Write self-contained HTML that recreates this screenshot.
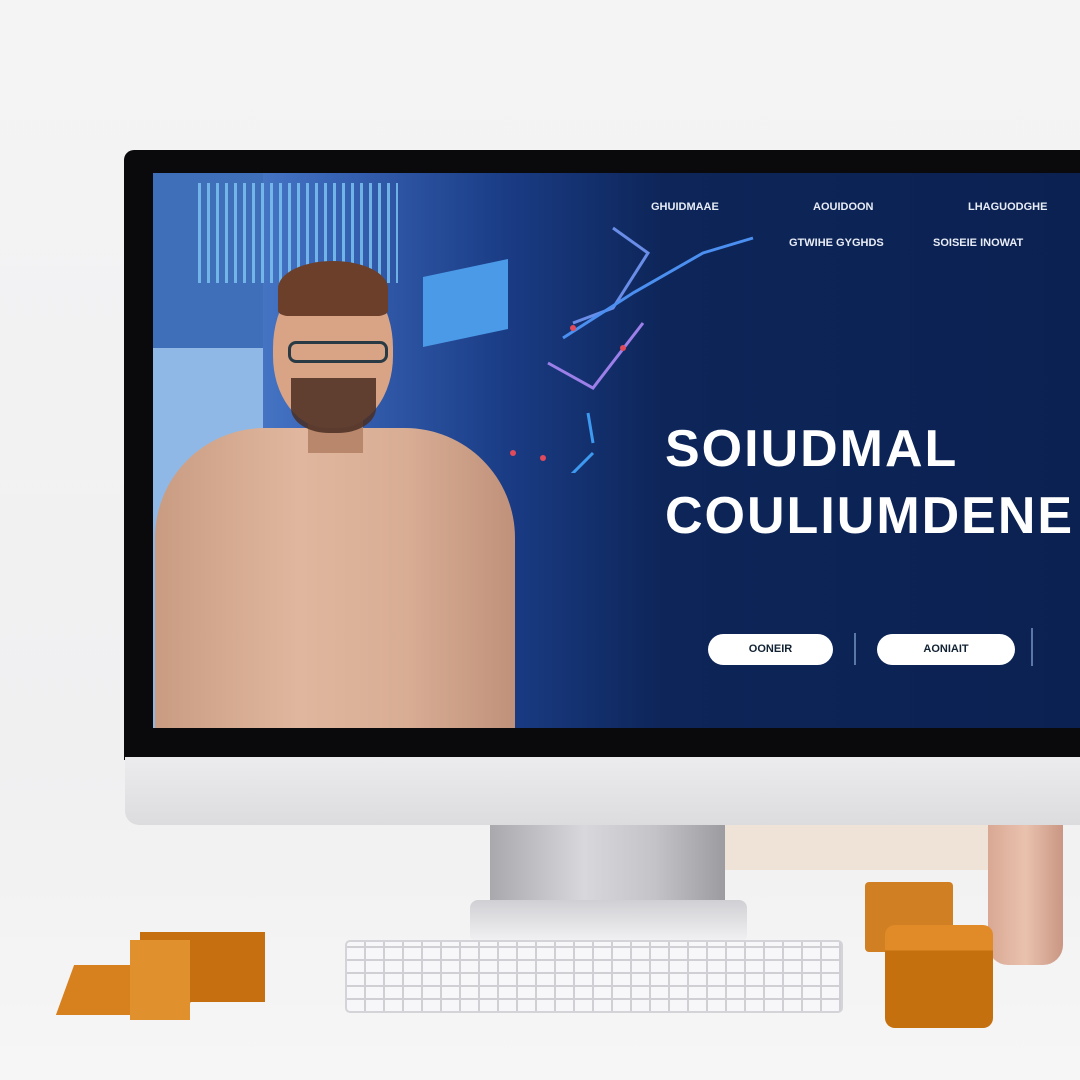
<!DOCTYPE html>
<html><head><style>
*{margin:0;padding:0;box-sizing:border-box}
body{width:1080px;height:1080px;overflow:hidden;background:#f2f2f3;position:relative;font-family:"Liberation Sans",sans-serif}
.a{position:absolute}
</style></head><body>
<div class="a" style="left:0;top:0;width:1080px;height:1080px;background:linear-gradient(180deg,#f4f4f5 0%,#f0f0f1 70%,#f6f6f6 100%)"></div>
<!-- bezel -->
<div class="a" style="left:124px;top:150px;width:970px;height:610px;background:#0a0a0c;border-radius:10px 0 0 0"></div>
<!-- screen -->
<div class="a" style="left:153px;top:173px;width:930px;height:555px;background:linear-gradient(90deg,#5b8ed8 0%,#3a66b8 18%,#1a3c85 38%,#0d2558 55%,#0b2152 100%);overflow:hidden">
  <div class="a" style="left:0;top:0;width:110px;height:175px;background:#3e6fb8"></div>
  <div class="a" style="left:0;top:175px;width:110px;height:380px;background:#8fb8e6"></div>
  <div class="a" style="left:45px;top:10px;width:200px;height:100px;background:repeating-linear-gradient(90deg,#7fc8f5 0 3px,transparent 3px 9px);opacity:.8"></div>
  <div class="a" style="left:270px;top:95px;width:85px;height:70px;background:#4b9ae8;transform:skewY(-12deg)"></div>
  <svg class="a" style="left:300px;top:40px" width="320" height="260"><g fill="none" stroke-width="3"><path d="M160 15 L195 40 L160 95 L120 110" stroke="#6a8de8"/><path d="M110 125 L180 80 L250 40 L300 25" stroke="#4b8ff0"/><path d="M140 230 L135 200 M100 280 L140 240" stroke="#3d9af0"/><path d="M95 150 L140 175 L190 110" stroke="#9c7fe8"/></g><g fill="#e04a5a"><circle cx="120" cy="115" r="3"/><circle cx="170" cy="135" r="3"/><circle cx="60" cy="240" r="3"/><circle cx="90" cy="245" r="3"/></g></svg>
  <!-- person -->
  <div class="a" style="left:2px;top:255px;width:360px;height:320px;background:linear-gradient(90deg,#c99c82,#e0b79e 40%,#d8ad94 70%,#c0917a);border-radius:110px 110px 0 0"></div>
  <div class="a" style="left:155px;top:220px;width:55px;height:60px;background:#b8876c"></div>
  <div class="a" style="left:120px;top:95px;width:120px;height:160px;background:#d9a486;border-radius:50% 50% 45% 45%"></div>
  <div class="a" style="left:125px;top:88px;width:110px;height:55px;background:#6b3f2a;border-radius:50% 50% 10% 10%"></div>
  <div class="a" style="left:138px;top:205px;width:85px;height:55px;background:#4a2e22;border-radius:0 0 45% 45%;opacity:.85"></div>
  <div class="a" style="left:135px;top:168px;width:100px;height:22px;border:3px solid #2a3a44;border-radius:8px"></div>
  <div class="a" style="left:498px;top:28px;font-size:11px;font-weight:bold;color:#e8ecf5">GHUIDMAAE</div>
  <div class="a" style="left:660px;top:28px;font-size:11px;font-weight:bold;color:#e8ecf5">AOUIDOON</div>
  <div class="a" style="left:815px;top:28px;font-size:11px;font-weight:bold;color:#e8ecf5">LHAGUODGHE</div>
  <div class="a" style="left:636px;top:64px;font-size:11px;font-weight:bold;color:#e8ecf5">GTWIHE GYGHDS</div>
  <div class="a" style="left:780px;top:64px;font-size:11px;font-weight:bold;color:#e8ecf5">SOISEIE INOWAT</div>
  <div class="a" style="left:512px;top:246px;font-size:52px;font-weight:bold;color:#fff;letter-spacing:2px">SOIUDMAL</div>
  <div class="a" style="left:512px;top:313px;font-size:52px;font-weight:bold;color:#fff;letter-spacing:2px;white-space:nowrap">COULIUMDENE</div>
  <div class="a" style="left:555px;top:461px;width:125px;height:31px;background:#fff;border-radius:16px;font-size:11px;font-weight:bold;color:#123;text-align:center;line-height:31px">OONEIR</div>
  <div class="a" style="left:701px;top:460px;width:2px;height:32px;background:#5a77aa"></div>
  <div class="a" style="left:724px;top:461px;width:138px;height:31px;background:#fff;border-radius:16px;font-size:11px;font-weight:bold;color:#123;text-align:center;line-height:31px">AONIAIT</div>
  <div class="a" style="left:878px;top:455px;width:2px;height:38px;background:#5a77aa"></div>
</div>
<!-- chin -->
<div class="a" style="left:125px;top:757px;width:960px;height:68px;background:linear-gradient(180deg,#ececee,#dcdcde);border-radius:0 0 0 14px"></div>
<!-- background furniture -->
<div class="a" style="left:720px;top:825px;width:270px;height:45px;background:#efe2d6"></div>
<div class="a" style="left:988px;top:825px;width:75px;height:140px;background:linear-gradient(90deg,#d9a894,#e9c2ae,#c99683);border-radius:0 0 20px 20px"></div>
<!-- stand -->
<div class="a" style="left:490px;top:825px;width:235px;height:85px;background:linear-gradient(90deg,#a9a9ad,#d8d8dc 40%,#c4c4c8 70%,#9c9ca0)"></div>
<div class="a" style="left:470px;top:900px;width:277px;height:40px;background:linear-gradient(180deg,#d0d0d4,#f0f0f2);border-radius:8px 8px 4px 4px"></div>
<!-- keyboard -->
<div class="a" style="left:345px;top:940px;width:498px;height:73px;background-color:#f7f7f9;border:2px solid #d4d4d8;border-radius:5px;background-image:repeating-linear-gradient(0deg,transparent 0 11px,#d0d0d4 11px 13px),repeating-linear-gradient(90deg,transparent 0 17px,#d0d0d4 17px 19px)"></div>
<!-- orange blocks -->
<div class="a" style="left:65px;top:965px;width:130px;height:50px;background:#d7801e;transform:skewX(-20deg)"></div>
<div class="a" style="left:140px;top:932px;width:125px;height:70px;background:#c66f10"></div>
<div class="a" style="left:130px;top:940px;width:60px;height:80px;background:#e0902c"></div>
<div class="a" style="left:865px;top:882px;width:88px;height:70px;background:#d08022;border-radius:4px"></div>
<div class="a" style="left:885px;top:925px;width:108px;height:103px;background:linear-gradient(180deg,#e08a28 0 25%,#c5700f 25%);border-radius:10px"></div>
</body></html>
